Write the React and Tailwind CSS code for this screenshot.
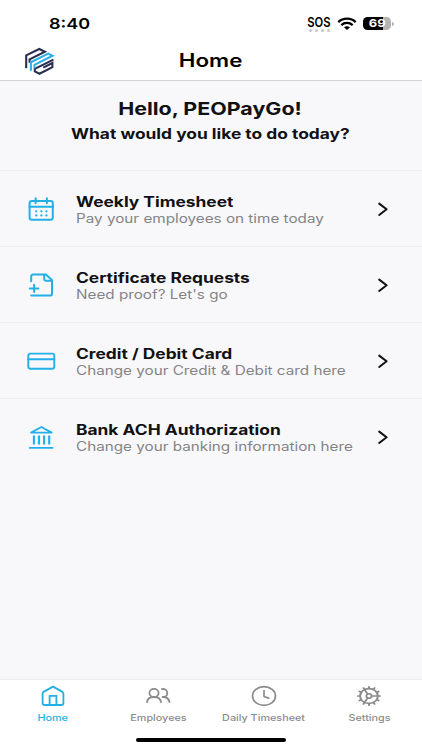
const iconProps = {
  fill: 'none',
  stroke: 'currentColor',
  strokeLinecap: 'round',
  strokeLinejoin: 'round',
}

const CalendarIcon = () => (
  <svg width="30" height="30" viewBox="0 0 30 30" strokeWidth="2" {...iconProps}>
    <rect x="3.6" y="6.9" width="23.2" height="18.8" rx="2.2" />
    <path d="M3.5 12.8H27M9.6 4.2v5M20.9 4.2v5" />
    <path strokeWidth="2.3" d="M10.3 17.3h.01M15.4 17.3h.01M20.4 17.3h.01M10.3 21.4h.01M15.4 21.4h.01M20.4 21.4h.01" />
  </svg>
)

const FilePlusIcon = () => (
  <svg width="30" height="30" viewBox="0 0 30 30" strokeWidth="2" {...iconProps}>
    <path d="M5.2 11.2V6.4a2 2 0 0 1 2-1.9h12.6l6.2 5.6v13.6a2 2 0 0 1-2 1.9H5.2" />
    <path d="M18.2 4.8v4.4a1.7 1.7 0 0 0 1.8 1.6h6" />
    <path d="M3.8 18.4h8.6M8.1 14.8v7.2" />
  </svg>
)

const CardIcon = () => (
  <svg width="30" height="30" viewBox="0 0 30 30" strokeWidth="1.9" {...iconProps}>
    <rect x="2.3" y="7.6" width="26" height="15.2" rx="2.2" />
    <path d="M2.3 13.3h26" />
  </svg>
)

const BankIcon = () => (
  <svg width="30" height="30" viewBox="0 0 30 30" strokeWidth="1.8" {...iconProps}>
    <path d="M5 10.6 15.4 5l10.3 5.6z" />
    <path d="M3.8 25.9h22.8" />
    <path strokeWidth="2.1" strokeLinecap="butt" d="M7.9 13.6v9M13 13.6v9M18.1 13.6v9M23.2 13.6v9" />
  </svg>
)

const ChevronIcon = () => (
  <svg width="14" height="16" viewBox="0 0 14 16" strokeWidth="2" {...iconProps}>
    <path d="M3.2 2.6 10.6 8.3l-7.4 5.7" />
  </svg>
)

const HomeIcon = () => (
  <svg width="28" height="24" viewBox="0 0 28 24" strokeWidth="1.8" {...iconProps}>
    <path d="M3.6 9.5a2 2 0 0 1 .9-1.6L14 2.6l9.5 5.3a2 2 0 0 1 .9 1.6v9.7a2 2 0 0 1-2 1.8H5.6a2 2 0 0 1-2-1.8z" />
    <path strokeLinejoin="miter" d="M10.6 20.8v-9h6.8v9" />
  </svg>
)

const EmployeesIcon = () => (
  <svg width="28" height="24" viewBox="0 0 28 24" strokeWidth="1.8" {...iconProps}>
    <ellipse cx="10" cy="8.9" rx="4.6" ry="4" />
    <path d="M3 18.2c.4-3.1 3.2-5.2 7-5.2s6.6 2.1 7 5.2" />
    <path d="M17.9 5.1c3.2-.5 5.4 1.3 5.4 3.8 0 2.4-1.9 4.1-4.7 4.1 3.9 0 6.4 1.9 6.9 5.2" />
  </svg>
)

const ClockIcon = () => (
  <svg width="28" height="24" viewBox="0 0 28 24" strokeWidth="1.7" {...iconProps}>
    <ellipse cx="14" cy="12" rx="11.5" ry="9.4" />
    <path d="M14 6.5v6l4.6 1.6" />
  </svg>
)

const TEETH = Array.from({ length: 12 }, (_, i) => i * 30)

const GearIcon = () => (
  <svg width="28" height="24" viewBox="0 0 28 24" strokeWidth="1.6" {...iconProps}>
    <g transform="translate(14 12) scale(1.2 1)">
      <circle r="7.4" strokeWidth="1.7" />
      <circle r="2.2" strokeWidth="1.5" />
      {TEETH.map((angle) => (
        <path key={angle} strokeWidth="1.7" d="M7.6 0h1.6" transform={`rotate(${angle})`} />
      ))}
      <path strokeWidth="1.5" d="M2.2 0h5M-1.1-2l-2.5-4.2M-1.1 2l-2.5 4.2" />
    </g>
  </svg>
)

const Logo = () => (
  <svg width="31" height="30" viewBox="0 0 31 30" fill="none" strokeWidth="2.1">
    <g stroke="#2b2f4f">
      <path d="M2.2 22.2V9.4L15.3 3l5.6 2.8L5.6 13.3v3.4" />
      <path d="M29.4 13.6 10.8 22.8v2.6l4.7 2.4 12.9-6.6V17l-9.2 4.6" />
    </g>
    <g stroke="#2cb2e6">
      <path d="M6.9 24.8V16.2L24.2 7.6l4.4 2.2-18.1 9.1v3.5" />
    </g>
  </svg>
)

const WifiIcon = () => (
  <svg width="20" height="14" viewBox="0 0 20 14" fill="none" stroke="#000" strokeWidth="2.2">
    <path d="M1.3 5.1C6 .5 14 .5 18.7 5.1" />
    <path d="M4.3 8.1c3.2-2.9 8.2-2.9 11.4 0" />
    <path d="M7 10.2c1.8-1.4 4.2-1.4 6 0L10 12.9z" fill="#000" stroke="none" />
  </svg>
)

const MENU = [
  {
    title: 'Weekly Timesheet',
    text: 'Pay your employees on time today',
    icon: CalendarIcon,
  },
  {
    title: 'Certificate Requests',
    text: "Need proof? Let's go",
    icon: FilePlusIcon,
  },
  {
    title: 'Credit / Debit Card',
    text: 'Change your Credit & Debit card here',
    icon: CardIcon,
  },
  {
    title: 'Bank ACH Authorization',
    text: 'Change your banking information here',
    icon: BankIcon,
  },
]

const TABS = [
  { label: 'Home', icon: HomeIcon, active: true },
  { label: 'Employees', icon: EmployeesIcon },
  { label: 'Daily Timesheet', icon: ClockIcon },
  { label: 'Settings', icon: GearIcon },
]

function StatusBar() {
  return (
    <div className="flex h-[42px] items-center justify-between pt-[5px] pr-[28px] pl-[49px]">
      <span className="origin-left scale-x-[1.2] pt-px text-[15px] font-semibold">8:40</span>
      <div className="flex items-center">
        <div className="flex w-6 flex-col items-center">
          <span className="scale-x-[0.9] text-[12.5px] leading-[13px] font-semibold">SOS</span>
          <div className="flex gap-[3px]">
            {[0, 1, 2, 3].map((dot) => (
              <span key={dot} className="h-[3px] w-[3px] rounded-full bg-[#c6c6c6]" />
            ))}
          </div>
        </div>
        <div className="ml-1.5">
          <WifiIcon />
        </div>
        <div className="ml-[6px] flex h-[13px] w-[28px] items-center justify-center rounded-[4.5px] bg-[linear-gradient(to_right,#000_71%,#b4b4b4_71%)]">
          <span className="scale-x-[1.18] text-[11px] leading-none font-bold text-white">69</span>
        </div>
        <span className="ml-px h-1 w-[2px] rounded-r-full bg-[#b4b4b4]" />
      </div>
    </div>
  )
}

function MenuRow({ item }) {
  const Icon = item.icon
  return (
    <button className="flex h-[76px] w-full items-center border-t border-[#efeff1] pr-[32px] pl-[26px] text-left">
      <span className="text-[#22b0e6]">
        <Icon />
      </span>
      <span className="ml-5 flex flex-1 flex-col items-start gap-px pt-[3px] whitespace-nowrap">
        <span className="origin-left scale-x-[1.24] text-[14px] leading-4 font-bold">{item.title}</span>
        <span className="origin-left scale-x-[1.22] text-[12.5px] leading-4 text-[#848487]">{item.text}</span>
      </span>
      <ChevronIcon />
    </button>
  )
}

function TabItem({ tab }) {
  const Icon = tab.icon
  return (
    <button className={`flex flex-1 flex-col items-center pt-1 ${tab.active ? 'text-[#22b0e6]' : 'text-[#8c8c8f]'}`}>
      <Icon />
      <span className="mt-1 scale-x-[1.2] text-[9px] leading-3 font-medium whitespace-nowrap">{tab.label}</span>
    </button>
  )
}

export default function App() {
  return (
    <div className="flex h-[750px] w-[422px] flex-col overflow-hidden bg-white font-['Inter',sans-serif] text-[#111113]">
      <header className="h-[81px] border-b border-[#d3d3d5] text-black">
        <StatusBar />
        <div className="grid h-[38px] grid-cols-[1fr_auto_1fr] items-center pl-6">
          <Logo />
          <h1 className="mr-6 scale-x-[1.24] text-[18px] leading-6 font-semibold">Home</h1>
        </div>
      </header>

      <main className="flex-1 bg-[#f8f8fb]">
        <div className="flex h-[89px] flex-col items-center pt-4 pr-0.5">
          <h2 className="scale-x-[1.225] text-[17.5px] leading-6 font-bold whitespace-nowrap">Hello, PEOPayGo!</h2>
          <p className="mt-[3px] scale-x-[1.24] text-[14px] leading-5 font-bold whitespace-nowrap">
            What would you like to do today?
          </p>
        </div>
        {MENU.map((item) => (
          <MenuRow key={item.title} item={item} />
        ))}
      </main>

      <nav className="h-[71px] border-t border-[#eeeef0] bg-white">
        <div className="flex h-[58px]">
          {TABS.map((tab) => (
            <TabItem key={tab.label} tab={tab} />
          ))}
        </div>
        <div className="mx-auto h-1 w-[150px] rounded-full bg-black" />
      </nav>
    </div>
  )
}
